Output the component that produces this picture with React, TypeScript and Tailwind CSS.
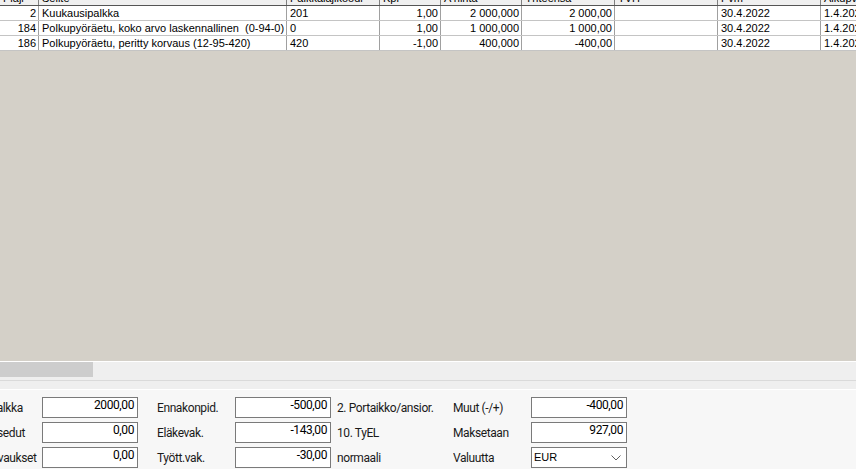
import { ReactNode } from "react";

type Col = { key: string; title: string; width: string; align: "left" | "right" };

const cols: Col[] = [
  { key: "nr", title: "Plaji", width: "w-[39px]", align: "right" },
  { key: "selite", title: "Selite", width: "w-[248px]", align: "left" },
  { key: "koodi", title: "Palkkalajikoodi", width: "w-[93px]", align: "left" },
  { key: "kpl", title: "Kpl", width: "w-[61px]", align: "right" },
  { key: "hinta", title: "A hinta", width: "w-[81px]", align: "right" },
  { key: "yht", title: "Yhteensä", width: "w-[93px]", align: "right" },
  { key: "tvh", title: "TVH", width: "w-[103px]", align: "left" },
  { key: "pvm", title: "Pvm", width: "w-[103px]", align: "left" },
  { key: "alku", title: "Alkupvm", width: "w-[60px]", align: "left" },
];

const rows: Record<string, string>[] = [
  { nr: "2", selite: "Kuukausipalkka", koodi: "201", kpl: "1,00", hinta: "2 000,000", yht: "2 000,00", tvh: "", pvm: "30.4.2022", alku: "1.4.2022" },
  { nr: "184", selite: "Polkupyöräetu, koko arvo laskennallinen  (0-94-0)", koodi: "0", kpl: "1,00", hinta: "1 000,000", yht: "1 000,00", tvh: "", pvm: "30.4.2022", alku: "1.4.2022" },
  { nr: "186", selite: "Polkupyöräetu, peritty korvaus (12-95-420)", koodi: "420", kpl: "-1,00", hinta: "400,000", yht: "-400,00", tvh: "", pvm: "30.4.2022", alku: "1.4.2022" },
];

function Cell({ col, children }: { col: Col; children: ReactNode }) {
  return (
    <div
      className={`${col.width} shrink-0 h-full border-r border-[#a0a0a0] overflow-hidden whitespace-pre px-[3px] pr-[2px] ${
        col.align === "right" ? "text-right" : "text-left"
      }`}
    >
      {children}
    </div>
  );
}

function Box({ value }: { value: string }) {
  return (
    <div className="h-[21px] w-[96px] border border-[#7a7a7a] bg-white text-right pr-[3px] leading-[15px] text-black">
      {value}
    </div>
  );
}

function Label({ children, className = "" }: { children: ReactNode; className?: string }) {
  return <div className={`h-[21px] flex items-center whitespace-nowrap overflow-hidden text-[#1a1a1a] ${className}`}>{children}</div>;
}

export default function App() {
  return (
    <div className="w-[856px] h-[469px] overflow-hidden flex flex-col bg-[#d4d0c8]">
      {/* palkkarivit */}
      <div className="font-['Liberation_Sans',sans-serif] text-[11px] text-black">
        <div className="flex h-[6px] overflow-hidden bg-[#f0f0f0] border-b border-[#555]">
          {cols.map((c) => (
            <div key={c.key} className={`${c.width} shrink-0 h-full border-r border-[#808080] px-[3px] overflow-hidden`}>
              <div className="-mt-[8px] leading-[13px] whitespace-nowrap">{c.title}</div>
            </div>
          ))}
        </div>
        {rows.map((r) => (
          <div key={r.nr} className="flex h-[15px] bg-white border-b border-[#c4c4c4] leading-[14px]">
            {cols.map((c) => (
              <Cell key={c.key} col={c}>
                {r[c.key]}
              </Cell>
            ))}
          </div>
        ))}
      </div>

      <div className="flex-1" />

      {/* vaakavieritys */}
      <div className="border-t border-white bg-[#efefef] h-[19px]">
        <div className="w-[93px] h-[15px] bg-[#cdcdcd]" />
      </div>
      <div className="border-t border-[#dadada] bg-[#efefef] h-[10px] border-b border-b-white" />

      {/* yhteenveto */}
      <div className="h-[79px] bg-[#f7f7f7] pt-[7px] font-['Roboto',sans-serif] text-[12px] tracking-[-0.4px]">
        <div className="ml-[-40px] grid grid-cols-[82px_96px_97px_96px_122px_78px_96px] gap-y-[4px]">
          <Label>Bruttopalkka</Label>
          <Box value="2000,00" />
          <Label className="pl-[19px]">Ennakonpid.</Label>
          <Box value="-500,00" />
          <Label className="pl-[6px]">2. Portaikko/ansior.</Label>
          <Label>Muut (-/+)</Label>
          <Box value="-400,00" />

          <Label>Luontoisedut</Label>
          <Box value="0,00" />
          <Label className="pl-[19px]">Eläkevak.</Label>
          <Box value="-143,00" />
          <Label className="pl-[6px]">10. TyEL</Label>
          <Label>Maksetaan</Label>
          <Box value="927,00" />

          <Label>Kulukorvaukset</Label>
          <Box value="0,00" />
          <Label className="pl-[19px]">Tyött.vak.</Label>
          <Box value="-30,00" />
          <Label className="pl-[6px]">normaali</Label>
          <Label>Valuutta</Label>
          <div className="h-[21px] w-[96px] border border-[#7a7a7a] bg-white flex items-center justify-between pl-[2px] pr-[5px] font-['Liberation_Sans',sans-serif] text-[11px] tracking-normal text-black">
            <span>EUR</span>
            <svg width="10" height="6" viewBox="0 0 10 6" fill="none" stroke="#606060" strokeWidth="1">
              <path d="M0.5 0.5 L5 5 L9.5 0.5" />
            </svg>
          </div>
        </div>
      </div>
    </div>
  );
}
